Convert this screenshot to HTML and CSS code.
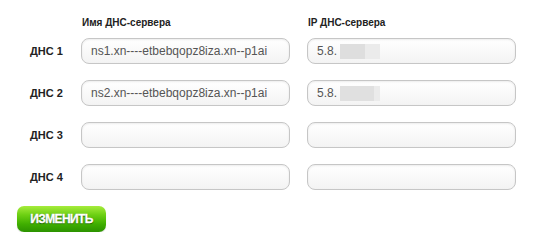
FILE: index.html
```html
<!DOCTYPE html>
<html lang="ru">
<head>
<meta charset="utf-8">
<link rel="stylesheet" href="styles.css">
</head>
<body>
<div class="page">
  <div class="grid heads">
    <div></div>
    <div class="head">Имя ДНС-сервера</div>
    <div class="head">IP ДНС-сервера</div>
  </div>
  <div class="grid rows">
    <div class="label">ДНС 1</div>
    <div class="field">ns1.xn----etbebqopz8iza.xn--p1ai</div>
    <div class="field">5.8.<span class="mask mask-a"></span></div>

    <div class="label">ДНС 2</div>
    <div class="field">ns2.xn----etbebqopz8iza.xn--p1ai</div>
    <div class="field">5.8.<span class="mask mask-b"></span></div>

    <div class="label">ДНС 3</div>
    <div class="field"></div>
    <div class="field"></div>

    <div class="label">ДНС 4</div>
    <div class="field"></div>
    <div class="field"></div>
  </div>
  <div class="actions">
    <button class="btn">ИЗМЕНИТЬ</button>
  </div>
</div>
</body>
</html>
```

FILE: styles.css
```css
html, body {
  margin: 0;
  padding: 0;
  background: #ffffff;
}
.page {
  font-family: "Liberation Sans", Arial, sans-serif;
  padding-top: 15px;
}
.grid {
  display: grid;
  grid-template-columns: 64px 209px 209px;
  column-gap: 17px;
}
.heads {
  height: 16px;
  margin-bottom: 7px;
}
.rows {
  grid-auto-rows: 26px;
  row-gap: 16px;
}
.head {
  font-size: 10px;
  font-weight: bold;
  color: #222;
  padding-left: 1px;
  line-height: 16px;
}
.label {
  font-size: 11px;
  font-weight: bold;
  color: #222;
  padding-left: 30px;
  line-height: 26px;
  white-space: nowrap;
}
.field {
  box-sizing: border-box;
  height: 26px;
  border: 1px solid #c6c6c6;
  border-radius: 8px;
  background: linear-gradient(#ffffff, #f3f3f3);
  box-shadow: inset 0 1px 2px rgba(0,0,0,0.08);
  font-size: 12px;
  color: #555;
  padding-left: 9px;
  line-height: 24px;
  display: flex;
  align-items: center;
  white-space: nowrap;
  overflow: hidden;
}
.mask {
  display: inline-block;
  height: 15px;
  width: 40px;
  margin-left: 3px;
}
.mask-a {
  background: linear-gradient(90deg, #dedede 0, #dedede 63%, #ebebeb 63%, #ebebeb 100%);
}
.mask-b {
  background: linear-gradient(90deg, #e0e0e0 0, #e0e0e0 85%, #ebebeb 85%);
}
.actions {
  padding: 16px 0 0 17px;
}
.btn {
  display: block;
  width: 89px;
  height: 26px;
  border: none;
  border-radius: 7px;
  background: linear-gradient(#a6ec3c 0%, #6ccf12 35%, #3fae00 70%, #2c9200 100%);
  box-shadow: 0 1px 1px rgba(0,0,0,0.15);
  color: #ffffff;
  font-family: "Liberation Sans", Arial, sans-serif;
  font-size: 12px;
  font-weight: bold;
  letter-spacing: -0.6px;
  -webkit-text-stroke: 0.3px #ffffff;
  text-shadow: 0 1px 1px #1d5a00, 0 0 1px #2a6a00;
  padding: 0;
  cursor: pointer;
}
```
